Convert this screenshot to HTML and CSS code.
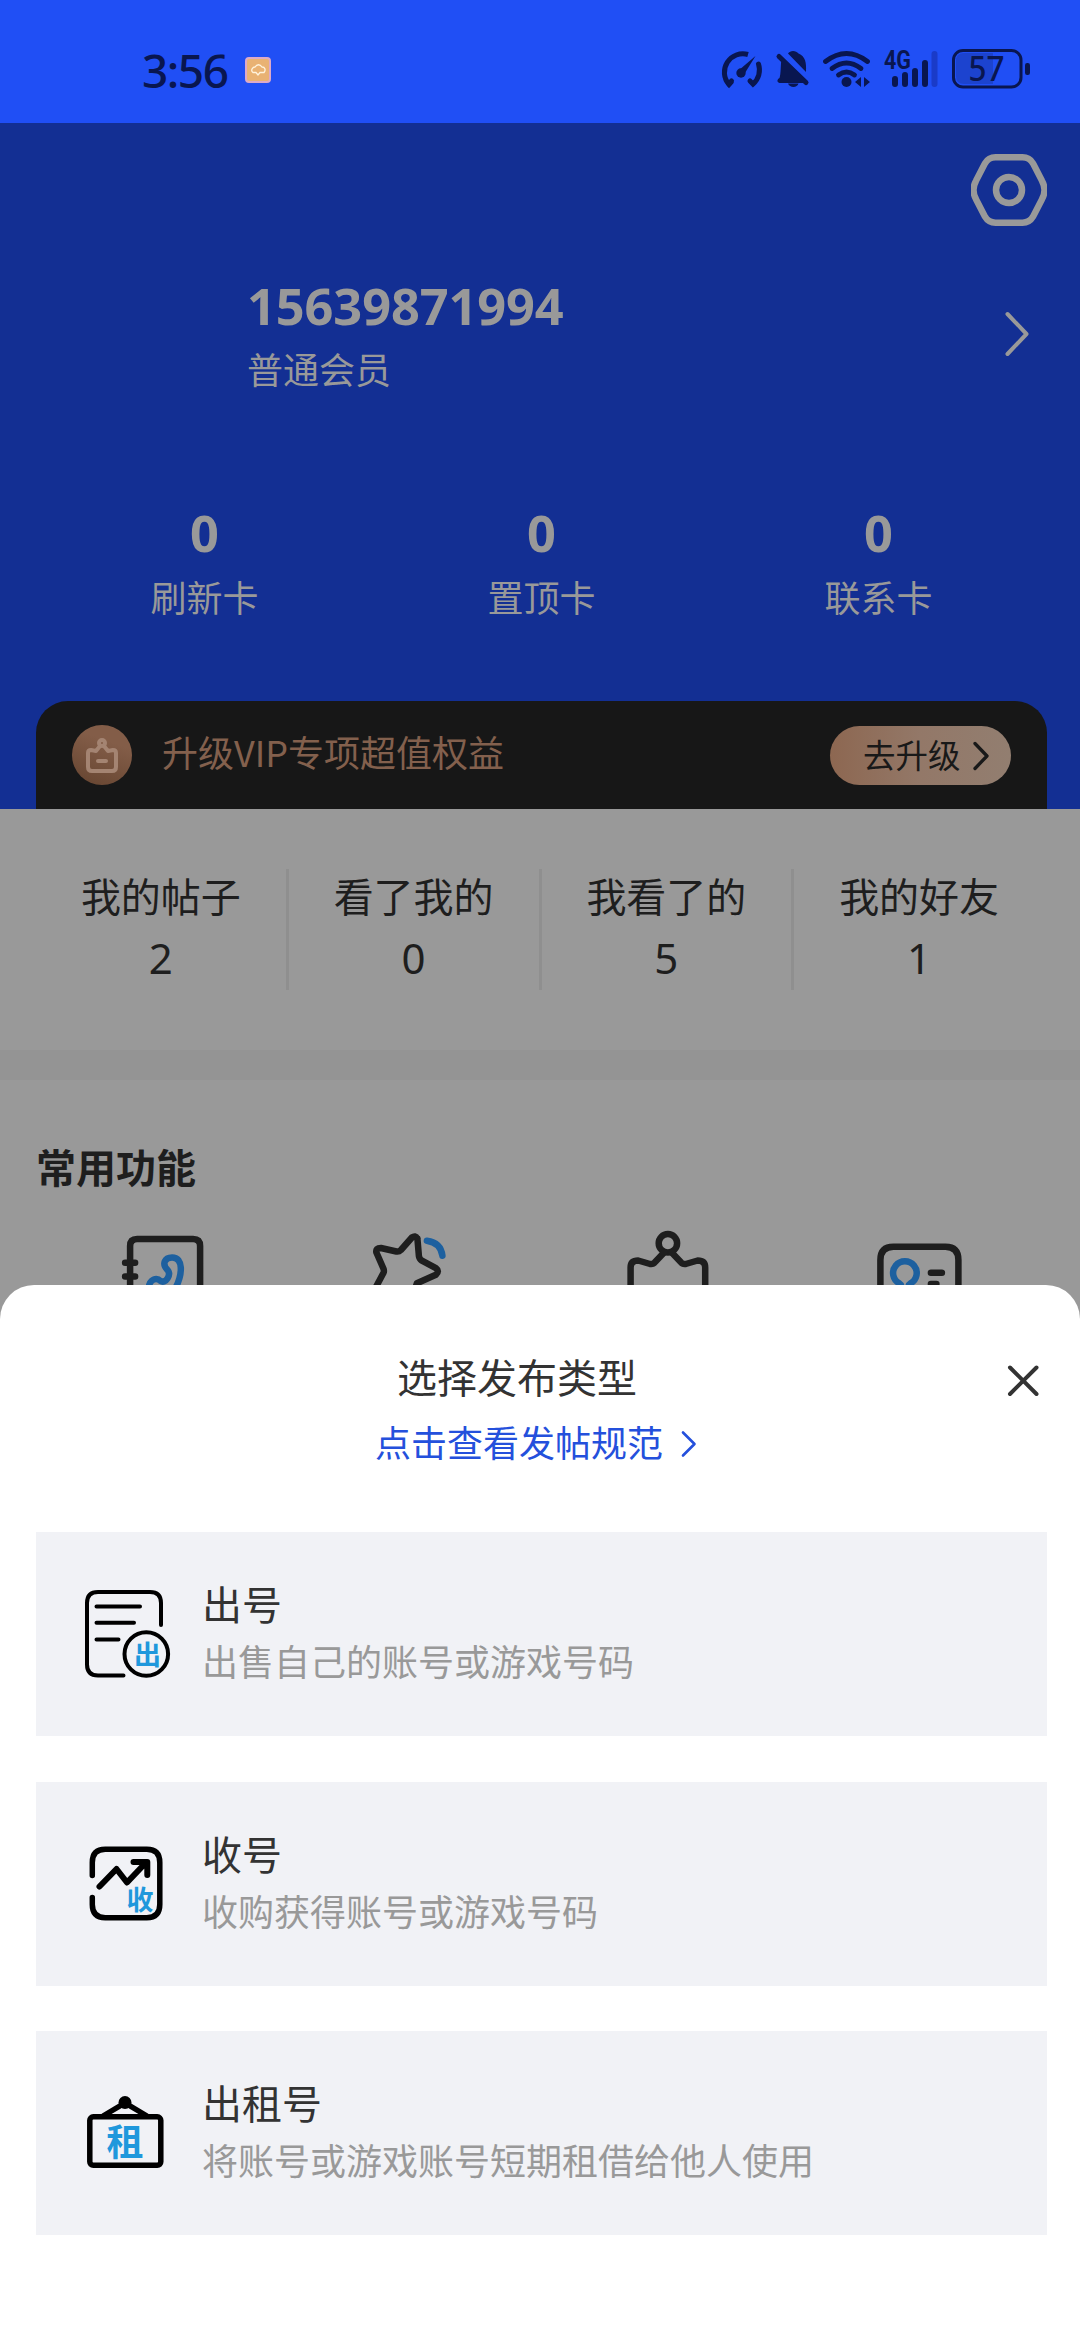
FILE: index.html
```html
<!DOCTYPE html>
<html lang="zh-CN">
<head>
<meta charset="utf-8">
<title>我的</title>
<link rel="stylesheet" href="styles.css">
</head>
<body>
<header class="status">
  <div class="status-left">
    <span class="clock">3:56</span>
    <svg class="app-dot" width="26" height="26" viewBox="0 0 26 26">
      <rect x="1" y="1" width="24" height="24" rx="3" fill="#e9b273" stroke="#dcaac8" stroke-width="2"/>
      <path d="M8 15.500C5 13 8 10 10 10c2-3 5-3 7 0 3 0 4 3 2 5.500h-4l-2 2.500-2-2.500z" fill="none" stroke="#fff3dc" stroke-width="1.300"/>
    </svg>
  </div>
  <svg class="status-icons" width="312" height="44" viewBox="719 47 312 44">
    <g fill="none" stroke="#091650" stroke-width="5" stroke-linecap="round">
      <path d="M732 81l-3 3.500A18.500 18.500 0 0 1 748 54.500" stroke-linecap="butt"/>
      <path d="M758.500 64A18.500 18.500 0 0 1 753 84l-3-3"/>
      <path d="M729 84l2.500-3"/>
    </g>
    <path d="M755.500 56l-17 14.500 5.500 4z" fill="#091650"/>
    <circle cx="741" cy="73" r="4.700" fill="#091650"/>
    <path d="M788 53.500c2-3.500 8-3.500 10.500 0 7 3 8 9 7.500 18.500zM781.500 59l25 24h-27c-3-1-2.500-3.500 0-5 1.500-4 1-13 2-19zM788 83.500h10.500c-1 4.500-9 4.500-10.500 0z" fill="#091650"/>
    <path d="M783 55.500l26 25" stroke="#204ff5" stroke-width="3"/>
    <path d="M779 56.500l27 26" stroke="#091650" stroke-width="5" stroke-linecap="round"/>
    <g fill="none" stroke="#091650" stroke-width="4.800" stroke-linecap="round">
      <path d="M825.500 61.500q21-16 42 0"/>
      <path d="M832 68.500q14.500-11 29 0"/>
      <path d="M838.500 75q8-6 16 0"/>
    </g>
    <circle cx="846.500" cy="82" r="5" fill="#091650"/>
    <path d="M861 77v10l-6-5zM864 77v10l6-5z" fill="#091650"/>
    <text class="net" x="884" y="69" textLength="27" lengthAdjust="spacingAndGlyphs">4G</text>
    <g stroke="#091650" stroke-width="6" stroke-linecap="round">
      <path d="M895 79v5M905 75v9M915 71v13M925 63v21"/>
      <path d="M934.500 54v30" stroke="#1a3bc8"/>
    </g>
    <path d="M964 53h29v31h-29q-8 0-8-8V61q0-8 8-8z" fill="#1c43cf"/>
    <rect x="953.500" y="50.500" width="67.500" height="36.500" rx="9.500" fill="none" stroke="#091650" stroke-width="3"/>
    <text class="level" x="968.500" y="81" textLength="36" lengthAdjust="spacingAndGlyphs">57</text>
    <rect x="1025" y="63" width="5" height="12" rx="2.200" fill="#091650"/>
  </svg>
</header>

<main class="page">
  <section class="hero">
    <div class="toolbar">
      <svg width="76" height="74" viewBox="971.500 153 76 74" fill="none" stroke="#999" stroke-width="6.500">
        <path d="M996 157.300h27q7 0 10.500 6l9 17.500q2.500 4.500 2.500 9.200t-2.500 9.200l-9 17.500q-3.500 6-10.500 6h-27q-7 0-10.500-6l-9-17.500q-2.500-4.500-2.500-9.200t2.500-9.200l9-17.500q3.500-6 10.500-6z"/>
        <circle cx="1009.500" cy="190" r="13"/>
      </svg>
    </div>
    <div class="profile">
      <div>
        <div class="phone">15639871994</div>
        <div class="level-name">普通会员</div>
      </div>
      <svg width="26" height="46" viewBox="0 0 26 46" fill="none" stroke="#999" stroke-width="4" stroke-linecap="round" stroke-linejoin="round"><path d="M2.500 3L21.500 23 2.500 43"/></svg>
    </div>
    <div class="cards">
      <div><b>0</b><span>刷新卡</span></div>
      <div><b>0</b><span>置顶卡</span></div>
      <div><b>0</b><span>联系卡</span></div>
    </div>
    <div class="vip">
      <div class="vip-badge">
        <svg width="32" height="36" viewBox="0 0 32 36" fill="none" stroke="#a48472" stroke-width="4" stroke-linecap="round" stroke-linejoin="round">
          <circle cx="16" cy="5" r="3"/>
          <path d="M14 8l-4 5-5-1q-3 0-3 3v14q0 4 4 4h20q4 0 4-4V15q0-3-3-3l-5 1-4-5M12 23h8"/>
        </svg>
      </div>
      <span class="vip-text">升级VIP专项超值权益</span>
      <div class="vip-button">
        <span>去升级</span>
        <svg width="20" height="32" viewBox="0 0 20 32" fill="none" stroke="#191919" stroke-width="3.300" stroke-linecap="round" stroke-linejoin="round"><path d="M4 3.500L16 16 4 28.500"/></svg>
      </div>
    </div>
  </section>

  <section class="counts">
    <div><span>我的帖子</span><em>2</em></div>
    <div><span>看了我的</span><em>0</em></div>
    <div><span>我看了的</span><em>5</em></div>
    <div><span>我的好友</span><em>1</em></div>
  </section>

  <section class="tools">
    <h2>常用功能</h2>
    <div class="tool-row">
      <svg width="88" height="76" viewBox="118.400 1230 88 76">
        <path d="M130.500 1306v-60q0-7 7-7h56q7 0 7 7v60M125.500 1262.700h10M125.500 1276.500h10"/>
        <path class="accent" d="M149 1288C150 1279 157 1277 161 1281C166 1284 172 1275 168 1270C162 1264 165 1257.500 172.500 1257.500C184 1257.500 183 1274 176 1288"/>
      </svg>
      <svg width="88" height="76" viewBox="371.100 1230 88 76">
        <path d="M417.500 1238.500L419 1256q.3 3 3 4.700l14 7.500q4 3 0 6.500l-19 8.500-2 6M417.500 1238.500q-2-3.500-5.500-1L401 1250q-2 2-4.500 1.500L381 1248q-5.500 0-4.500 4.500l7 16q1 2.500 0 4.500l-8 15"/>
        <path class="accent" d="M427 1240.700q14 2 15.500 15"/>
      </svg>
      <svg width="88" height="76" viewBox="623.900 1230 88 76">
        <circle cx="667.800" cy="1243.300" r="9.200"/>
        <path d="M664 1252.500l-9 9.500q-2 2.500-5 2l-12-3.500q-7.500 0-7.500 7v38M671.600 1252.500l9 9.500q2 2.500 5 2l12-3.500q7.500 0 7.500 7v38"/>
      </svg>
      <svg width="88" height="76" viewBox="876.600 1230 88 76">
        <path d="M880 1306v-46q0-13.300 13-13.300h52q13 0 13 13.300v46"/>
        <path class="accent" d="M898 1288q5-2 1-4.500a11.800 11.800 0 1 1 11 0q-4 2.500 1 4.500"/>
        <path d="M930.500 1272.700h11M930.500 1284h5.500"/>
      </svg>
    </div>
  </section>
</main>

<section class="sheet">
  <div class="sheet-head">
    <h1>选择发布类型</h1>
    <svg width="49" height="56" viewBox="998 1348 49 56" fill="none" stroke="#333" stroke-width="4" stroke-linecap="round"><path d="M1010 1367.500l26.500 26.500M1036.500 1367.500l-26.500 26.500"/></svg>
  </div>
  <div class="rules">
    <span>点击查看发帖规范</span>
    <svg width="20" height="30" viewBox="0 0 20 30" fill="none" stroke="#2450dc" stroke-width="2.600" stroke-linecap="round" stroke-linejoin="round"><path d="M4 3.500L15.500 15 4 26.500"/></svg>
  </div>
  <div class="types">
    <div class="type">
      <svg width="100" height="100" viewBox="72 1584 100 100" fill="none" stroke="#000" stroke-width="4" stroke-linecap="round">
        <path d="M161 1625v-22q0-11-11-11H98q-11 0-11 11v61.500q0 11 11 11h25.500M96.500 1606.500h43.500M96.500 1622.700h37.500M96.500 1639.500h22"/>
        <circle cx="146.300" cy="1654" r="21.800"/>
        <text class="glyph bold" x="134" y="1664.500" font-size="27">出</text>
      </svg>
      <div><h3>出号</h3><p>出售自己的账号或游戏号码</p></div>
    </div>
    <div class="type">
      <svg width="100" height="100" viewBox="72 1833.500 100 100" fill="none" stroke="#000" stroke-width="5.500" stroke-linecap="round" stroke-linejoin="round">
        <path d="M92.300 1875v-13q0-13.200 13-13.200h41.500q13 0 13 13.200v42q0 13.200-13 13.200h-41.500q-13 0-13-13.200v-7"/>
        <path stroke-width="6" d="M99.500 1886l17-17.500 10.500 13.500 19-20M133.500 1861.500h13.800v13"/>
        <text class="glyph bold" x="126.500" y="1909" font-size="27">收</text>
      </svg>
      <div><h3>收号</h3><p>收购获得账号或游戏号码</p></div>
    </div>
    <div class="type">
      <svg width="100" height="100" viewBox="72 2083 100 100" fill="none" stroke="#000" stroke-width="5.500">
        <rect x="89.800" y="2116.800" width="71" height="48.500" rx="3.500"/>
        <path d="M103 2116l22-13 22 13"/>
        <circle cx="125" cy="2102.500" r="6.500" fill="#000" stroke="none"/>
        <text class="glyph bold" x="106.500" y="2155.500" font-size="37">租</text>
      </svg>
      <div><h3>出租号</h3><p>将账号或游戏账号短期租借给他人使用</p></div>
    </div>
  </div>
</section>
</body>
</html>
```
FILE: styles.css
```css
* { box-sizing: border-box; margin: 0; padding: 0; }
body {
  position: relative;
  width: 1080px;
  height: 2340px;
  overflow: hidden;
  background: #999;
  font-family: "Noto Sans CJK SC", "Noto Sans", sans-serif;
  color: #1e1e1e;
}
svg { display: block; flex: none; }

.status {
  display: flex;
  justify-content: space-between;
  height: 123px;
  padding: 47px 49px 0 142px;
  background: #204ff5;
  color: #091650;
}
.status-left { display: flex; gap: 16px; height: 46px; align-items: center; }
.clock { width: 87px; font: 500 46px/46px "Noto Sans", sans-serif; letter-spacing: -1.500px; white-space: nowrap; }
.net { font: 700 25px Roboto, sans-serif; fill: #091650; }
.level { font: 500 33.500px "Noto Sans", sans-serif; fill: #091650; }

.hero {
  display: flex;
  flex-direction: column;
  height: 686px;
  padding: 0 33px 0 36px;
  background: #132f93;
  color: #999;
}
.toolbar { display: flex; justify-content: flex-end; height: 146px; padding-top: 30px; }
.profile { display: flex; justify-content: space-between; height: 221px; padding: 7px 16px 0 211px; }
.phone { font: 700 50.500px/60px "Noto Sans", sans-serif; letter-spacing: -0.100px; }
.level-name { margin-top: 7px; font-size: 36px; line-height: 50px; }
.profile svg { margin-top: 35px; }
.cards { display: grid; grid-template-columns: repeat(3, 1fr); height: 211px; padding-top: 13px; text-align: center; }
.cards b { display: block; font: 700 50.500px/60px "Noto Sans", sans-serif; }
.cards span { display: block; margin-top: 8px; font-size: 36px; line-height: 50px; }
.vip {
  display: flex;
  align-items: flex-start;
  height: 108px;
  padding: 24px 36px 0;
  background: #171717;
  border-radius: 32px 32px 0 0;
}
.vip-badge {
  display: flex;
  justify-content: center;
  width: 60px;
  height: 60px;
  padding-top: 13px;
  border-radius: 50%;
  background: linear-gradient(20deg, #654430, #835d48 70%);
}
.vip-text { flex: 1; margin-left: 30px; font-size: 36px; line-height: 53px; color: #83604d; }
.vip-button {
  display: flex;
  align-items: center;
  gap: 10px;
  width: 181px;
  height: 59px;
  margin-top: 1px;
  padding-left: 33px;
  border-radius: 30px;
  background: linear-gradient(90deg, #8d6751, #937868 50%, #927e70);
  color: #191919;
  font-size: 32.500px;
  line-height: 54px;
}
.vip-button span { padding-bottom: 4px; }

.counts {
  display: grid;
  grid-template-columns: repeat(4, 1fr);
  height: 241px;
  padding: 60px 33px 60px 36px;
  text-align: center;
}
.counts div { border-right: 3px solid #8f8f8f; }
.counts div:last-child { border-color: transparent; }
.counts span { display: block; padding-top: 1px; font-size: 40px; line-height: 50px; }
.counts em { display: block; margin-top: 8px; font: 400 42px/60px "Noto Sans", sans-serif; }

.tools { padding: 59px 33px 0 36px; border-top: 30px solid #949494; }
.tools h2 { font-size: 40px; line-height: 54px; }
.tool-row { display: grid; grid-template-columns: repeat(4, 1fr); justify-items: center; margin-top: 37px; }
.tool-row svg { fill: none; stroke: #1e1e1e; stroke-width: 6.500px; stroke-linecap: round; stroke-linejoin: round; }
.tool-row .accent { stroke: #1d609f; }

.sheet {
  position: absolute;
  left: 0;
  right: 0;
  bottom: 0;
  height: 1055px;
  padding: 63px 33px 0 36px;
  border-radius: 34px 34px 0 0;
  background: #fff;
  color: #333;
}
.sheet-head { display: flex; }
.sheet-head h1 { flex: 1; font-size: 40px; font-weight: 400; line-height: 56px; text-align: center; }
.rules { display: flex; align-items: center; gap: 16px; margin: 12px 0 66px 339px; color: #2450dc; font-size: 36px; line-height: 50px; }
.rules svg { margin-top: 5px; }
.types { display: grid; gap: 45.500px; }
.type { display: flex; gap: 30px; height: 204px; padding: 52px 36px; background: #f1f2f6; }
.type h3 { font-size: 40px; font-weight: 400; line-height: 38px; }
.type p { margin-top: 13px; font-size: 36px; line-height: 50px; color: #999; white-space: nowrap; }
.glyph { fill: #1f98dc; stroke: none; }
.glyph.bold { font-weight: 700; }
```
